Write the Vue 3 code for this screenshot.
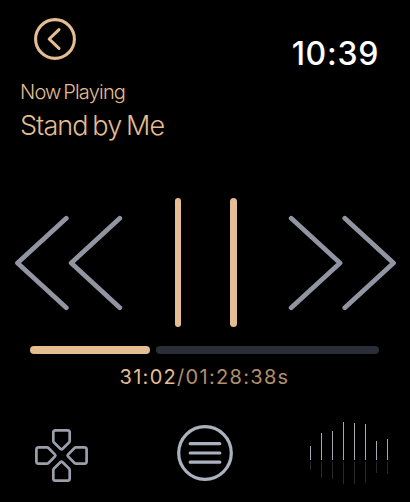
<script setup>
import { ref } from 'vue';

const clock = ref('10:39');
const title = ref('Stand by Me');
const elapsed = ref('31:02');
const duration = ref('01:28:38s');
const progress = ref(35);

// height of each bar and of its reflection
const wave = ref([
  [14, 8],
  [27, 16],
  [29, 17],
  [38, 22],
  [37, 22],
  [36, 21],
  [19, 11],
  [21, 12],
]);
</script>

<template>
  <div class="player">
    <header class="header">
      <svg class="back" viewBox="0 0 42 42">
        <circle cx="21" cy="21" r="19.4" />
        <path d="M25 11.6 L15.2 21 L25 30.4" />
      </svg>
      <span class="clock">{{ clock }}</span>
    </header>

    <div class="track-info">
      <div class="label">Now Playing</div>
      <div class="title">{{ title }}</div>
    </div>

    <div class="controls">
      <svg class="skip" viewBox="0 0 108 96">
        <path d="M51.3 3.3 L2.5 48 L51.3 92.7 M104.8 3.3 L56.2 48 L104.8 92.7" />
      </svg>
      <div class="pause">
        <span></span>
        <span></span>
      </div>
      <svg class="skip" viewBox="0 0 108 96">
        <path d="M3.2 3.3 L52 48 L3.2 92.7 M56.8 3.3 L105.5 48 L56.8 92.7" />
      </svg>
    </div>

    <div class="progress">
      <div class="played" :style="{ width: `calc(${progress}% - 2px)` }"></div>
      <div class="remaining"></div>
    </div>
    <div class="times">{{ elapsed }}<span>/{{ duration }}</span></div>

    <footer class="footer">
      <svg class="pad" viewBox="0 0 54 54">
        <path
          v-for="angle in [0, 90, 180, 270]"
          :key="angle"
          :transform="`rotate(${angle} 26.5 26.5)`"
          d="M20.5 1.4 H32.5 Q34.7 1.4 34.7 3.6 V11.8 Q34.7 12.8 34 13.5 L27.4 20 Q26.5 20.8 25.6 20 L19 13.5 Q18.3 12.8 18.3 11.8 V3.6 Q18.3 1.4 20.5 1.4 Z"
        />
      </svg>
      <svg class="menu" viewBox="0 0 56 56">
        <circle cx="28" cy="28" r="26.3" />
        <path d="M13.2 18.7 H42.8 M13.2 28 H42.8 M13.2 37.2 H42.8" />
      </svg>
      <div class="wave">
        <div v-for="(bar, index) in wave" :key="index" class="wave-bar">
          <div class="peak" :style="{ height: bar[0] + 'px' }"></div>
          <div class="reflection" :style="{ height: bar[1] + 'px' }"></div>
        </div>
      </div>
    </footer>
  </div>
</template>

<style>
body {
  margin: 0;
  background: #000;
}
</style>

<style scoped>
.player {
  width: 410px;
  height: 502px;
  box-sizing: border-box;
  overflow: hidden;
  background: #000;
  color: #e4bd93;
  font-family: Inter, 'Liberation Sans', sans-serif;
}

svg {
  display: block;
  fill: none;
  stroke-linecap: round;
  stroke-linejoin: round;
}

.header {
  display: flex;
  justify-content: space-between;
  height: 80px;
  padding: 18px 31px 0 34px;
  box-sizing: border-box;
}

.back {
  width: 42px;
  height: 42px;
  stroke: #e4bd93;
  stroke-width: 3.1;
}

.clock {
  margin-top: 16px;
  color: #fff;
  font-size: 32px;
  font-weight: 500;
  line-height: 40px;
  letter-spacing: 0.7px;
}

.track-info {
  height: 118px;
  padding-left: 20px;
  font-weight: 350;
  white-space: nowrap;
}

.label {
  font-size: 20px;
  line-height: 24px;
  letter-spacing: -0.8px;
  word-spacing: -2.2px;
}

.title {
  margin-top: 4px;
  font-size: 27px;
  line-height: 36px;
  letter-spacing: -0.95px;
  word-spacing: -1.8px;
}

.controls {
  display: flex;
  justify-content: space-between;
  height: 129px;
  padding: 0 14px 0 15px;
}

.skip {
  width: 108px;
  height: 96px;
  margin-top: 17px;
  stroke: #9095a1;
  stroke-width: 4.8;
}

.pause {
  display: flex;
  justify-content: space-between;
  width: 62px;
}

.pause span {
  width: 6.6px;
  border-radius: 4px;
  background: #e4bd93;
}

.progress {
  display: flex;
  gap: 6px;
  height: 8px;
  margin: 19px 31px 0 30px;
}

.played,
.remaining {
  border-radius: 4px;
}

.played {
  background: #e4bd93;
}

.remaining {
  flex: 1;
  background: #2b2e36;
}

.times {
  height: 28px;
  margin-top: 9px;
  padding-right: 1px;
  font-size: 20px;
  line-height: 28px;
  letter-spacing: 1.3px;
  text-align: center;
}

.times span {
  color: #b08f6e;
}

.footer {
  display: flex;
  justify-content: space-between;
  height: 72px;
  margin-top: 31px;
  padding: 0 22px 0 35px;
}

.pad {
  width: 54px;
  height: 54px;
  margin-top: 7px;
  stroke: #9a9fab;
  stroke-width: 2.7;
}

.menu {
  width: 56px;
  height: 56px;
  margin: 3px 0 0 11px;
  stroke: #acb2bd;
  stroke-width: 3.2;
}

.wave {
  display: flex;
  gap: 10px;
  height: 64px;
}

.wave-bar {
  display: grid;
  grid-template-rows: 38px 24px;
  row-gap: 2px;
  width: 1px;
}

.peak {
  align-self: end;
  background: #a5a8b2;
}

.reflection {
  background: #292929;
}
</style>
